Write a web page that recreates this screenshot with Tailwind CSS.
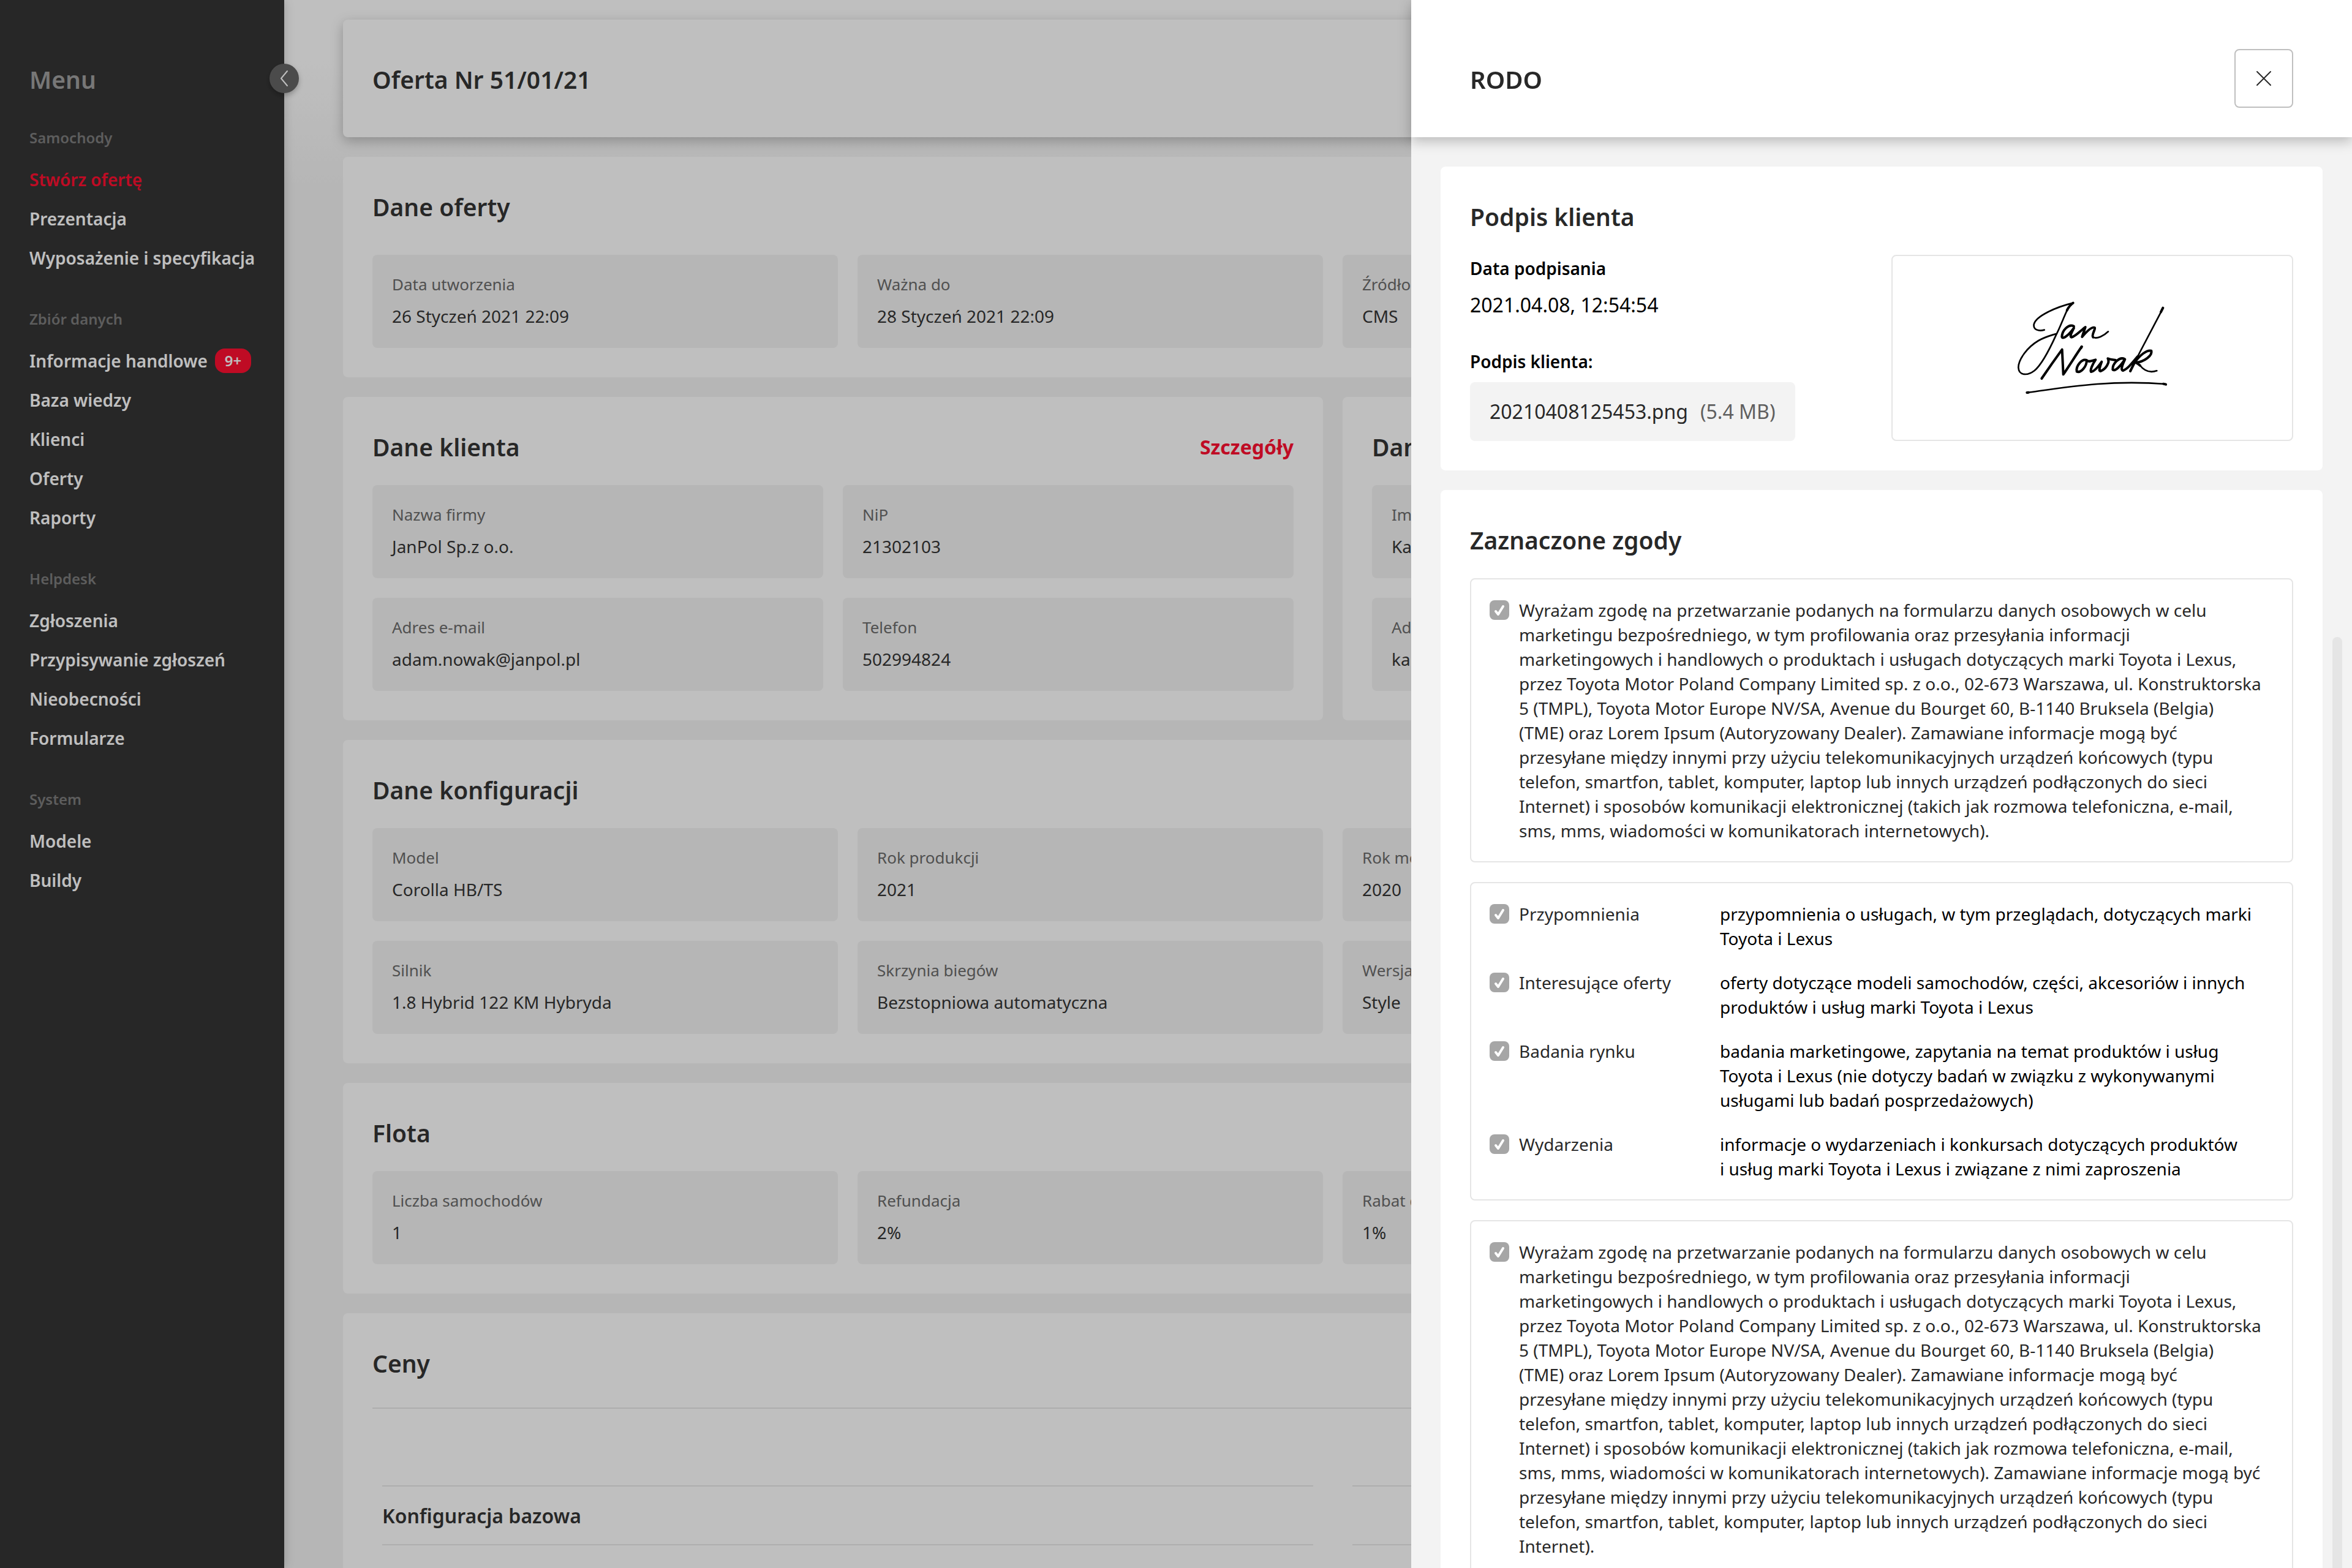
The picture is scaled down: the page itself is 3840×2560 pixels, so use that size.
<!DOCTYPE html>
<html lang="pl">
<head>
  <meta charset="UTF-8" />
  <title>Oferta Nr 51/01/21 - RODO</title>
  <meta name="viewport" content="width=device-width, initial-scale=1" />
  <script src="https://cdn.jsdelivr.net/npm/@tailwindcss/browser@4"></script>
</head>
<body class="h-screen overflow-hidden bg-[#f3f3f3] font-['Noto_Sans',sans-serif] text-[28px] leading-10 text-[#353535]">

  <div class="flex h-full">

    <!-- Sidebar -->
    <aside class="relative z-10 w-[464px] shrink-0 bg-[#353535] pt-24 pr-8 pl-12 whitespace-nowrap text-white shadow-[0_0_16px_rgba(0,0,0,0.2)]">
      <button type="button" aria-label="Zwiń menu" class="absolute top-[104px] -right-6 grid size-12 place-items-center rounded-full bg-[#656565] shadow-[0_4px_8px_rgba(0,0,0,0.25)]">
        <svg class="h-7 w-4" viewBox="0 0 16 28" fill="none" stroke="currentColor" stroke-width="2" stroke-linecap="round" stroke-linejoin="round"><path d="M13 2 3 14l10 12" /></svg>
      </button>

      <h2 class="text-[39px] leading-[68px] font-semibold text-[#9f9f9f]">Menu</h2>

      <nav class="mt-[45px] flex flex-col gap-[52px] font-semibold">
        <section>
          <h3 class="mb-5 text-2xl leading-8 text-[#7d7d7d]">Samochody</h3>
          <ul class="leading-[64px]">
            <li><a href="#" class="text-[#ff0f31]">Stwórz ofertę</a></li>
            <li><a href="#">Prezentacja</a></li>
            <li><a href="#">Wyposażenie i specyfikacja</a></li>
          </ul>
        </section>
        <section>
          <h3 class="mb-5 text-2xl leading-8 text-[#7d7d7d]">Zbiór danych</h3>
          <ul class="leading-[64px]">
            <li class="flex items-center gap-3"><a href="#">Informacje handlowe</a><span class="rounded-2xl bg-[#ff0f31] px-4 text-2xl leading-10">9+</span></li>
            <li><a href="#">Baza wiedzy</a></li>
            <li><a href="#">Klienci</a></li>
            <li><a href="#">Oferty</a></li>
            <li><a href="#">Raporty</a></li>
          </ul>
        </section>
        <section>
          <h3 class="mb-5 text-2xl leading-8 text-[#7d7d7d]">Helpdesk</h3>
          <ul class="leading-[64px]">
            <li><a href="#">Zgłoszenia</a></li>
            <li><a href="#">Przypisywanie zgłoszeń</a></li>
            <li><a href="#">Nieobecności</a></li>
            <li><a href="#">Formularze</a></li>
          </ul>
        </section>
        <section>
          <h3 class="mb-5 text-2xl leading-8 text-[#7d7d7d]">System</h3>
          <ul class="leading-[64px]">
            <li><a href="#">Modele</a></li>
            <li><a href="#">Buildy</a></li>
          </ul>
        </section>
      </nav>
    </aside>

    <!-- Offer -->
    <main class="flex min-w-0 flex-1 flex-col gap-8 overflow-hidden bg-[linear-gradient(#ffffff_100px,#f3f3f3_300px)] pt-8 pr-12 pl-24">
      <header class="flex h-48 shrink-0 items-center rounded-lg bg-white px-12 pt-1 shadow-[0_6px_20px_rgba(0,0,0,0.25)]">
        <h1 class="text-[39px] leading-[68px] font-semibold">Oferta Nr 51/01/21</h1>
      </header>

      <section class="shrink-0 rounded-lg bg-white p-12">
        <h2 class="text-[39px] leading-[68px] font-semibold">Dane oferty</h2>
        <dl class="mt-11 grid grid-cols-4 gap-8">
          <div class="rounded-lg bg-[#f3f3f3] p-8">
            <dt class="text-[26px] leading-8 text-[#6b6b6b]">Data utworzenia</dt>
            <dd class="mt-4">26 Styczeń 2021 22:09</dd>
          </div>
          <div class="rounded-lg bg-[#f3f3f3] p-8">
            <dt class="text-[26px] leading-8 text-[#6b6b6b]">Ważna do</dt>
            <dd class="mt-4">28 Styczeń 2021 22:09</dd>
          </div>
          <div class="rounded-lg bg-[#f3f3f3] p-8">
            <dt class="text-[26px] leading-8 text-[#6b6b6b]">Źródło</dt>
            <dd class="mt-4">CMS</dd>
          </div>
        </dl>
      </section>

      <div class="grid shrink-0 grid-cols-2 gap-8">
        <section class="rounded-lg bg-white p-12">
          <div class="flex items-center justify-between">
            <h2 class="text-[39px] leading-[68px] font-semibold">Dane klienta</h2>
            <a href="#" class="text-[32px] font-bold text-[#ff0f31]">Szczegóły</a>
          </div>
          <dl class="mt-7 grid grid-cols-2 gap-8">
            <div class="rounded-lg bg-[#f3f3f3] p-8">
              <dt class="text-[26px] leading-8 text-[#6b6b6b]">Nazwa firmy</dt>
              <dd class="mt-4">JanPol Sp.z o.o.</dd>
            </div>
            <div class="rounded-lg bg-[#f3f3f3] p-8">
              <dt class="text-[26px] leading-8 text-[#6b6b6b]">NiP</dt>
              <dd class="mt-4">21302103</dd>
            </div>
            <div class="rounded-lg bg-[#f3f3f3] p-8">
              <dt class="text-[26px] leading-8 text-[#6b6b6b]">Adres e-mail</dt>
              <dd class="mt-4">adam.nowak@janpol.pl</dd>
            </div>
            <div class="rounded-lg bg-[#f3f3f3] p-8">
              <dt class="text-[26px] leading-8 text-[#6b6b6b]">Telefon</dt>
              <dd class="mt-4">502994824</dd>
            </div>
          </dl>
        </section>

        <section class="rounded-lg bg-white p-12">
          <h2 class="text-[39px] leading-[68px] font-semibold">Dane</h2>
          <dl class="mt-7 grid grid-cols-2 gap-8">
            <div class="col-start-1 rounded-lg bg-[#f3f3f3] p-8">
              <dt class="text-[26px] leading-8 text-[#6b6b6b]">Imię</dt>
              <dd class="mt-4">Karol</dd>
            </div>
            <div class="col-start-1 rounded-lg bg-[#f3f3f3] p-8">
              <dt class="text-[26px] leading-8 text-[#6b6b6b]">Adres e-mail</dt>
              <dd class="mt-4">karol</dd>
            </div>
          </dl>
        </section>
      </div>

      <section class="shrink-0 rounded-lg bg-white p-12">
        <h2 class="text-[39px] leading-[68px] font-semibold">Dane konfiguracji</h2>
        <dl class="mt-7 grid grid-cols-4 gap-8">
          <div class="rounded-lg bg-[#f3f3f3] p-8">
            <dt class="text-[26px] leading-8 text-[#6b6b6b]">Model</dt>
            <dd class="mt-4">Corolla HB/TS</dd>
          </div>
          <div class="rounded-lg bg-[#f3f3f3] p-8">
            <dt class="text-[26px] leading-8 text-[#6b6b6b]">Rok produkcji</dt>
            <dd class="mt-4">2021</dd>
          </div>
          <div class="rounded-lg bg-[#f3f3f3] p-8">
            <dt class="text-[26px] leading-8 text-[#6b6b6b]">Rok modelowy</dt>
            <dd class="mt-4">2020</dd>
          </div>
          <div class="col-start-1 rounded-lg bg-[#f3f3f3] p-8">
            <dt class="text-[26px] leading-8 text-[#6b6b6b]">Silnik</dt>
            <dd class="mt-4">1.8 Hybrid 122 KM Hybryda</dd>
          </div>
          <div class="rounded-lg bg-[#f3f3f3] p-8">
            <dt class="text-[26px] leading-8 text-[#6b6b6b]">Skrzynia biegów</dt>
            <dd class="mt-4">Bezstopniowa automatyczna</dd>
          </div>
          <div class="rounded-lg bg-[#f3f3f3] p-8">
            <dt class="text-[26px] leading-8 text-[#6b6b6b]">Wersja</dt>
            <dd class="mt-4">Style</dd>
          </div>
        </dl>
      </section>

      <section class="shrink-0 rounded-lg bg-white p-12">
        <h2 class="text-[39px] leading-[68px] font-semibold">Flota</h2>
        <dl class="mt-7 grid grid-cols-4 gap-8">
          <div class="rounded-lg bg-[#f3f3f3] p-8">
            <dt class="text-[26px] leading-8 text-[#6b6b6b]">Liczba samochodów</dt>
            <dd class="mt-4">1</dd>
          </div>
          <div class="rounded-lg bg-[#f3f3f3] p-8">
            <dt class="text-[26px] leading-8 text-[#6b6b6b]">Refundacja</dt>
            <dd class="mt-4">2%</dd>
          </div>
          <div class="rounded-lg bg-[#f3f3f3] p-8">
            <dt class="text-[26px] leading-8 text-[#6b6b6b]">Rabat dealera</dt>
            <dd class="mt-4">1%</dd>
          </div>
        </dl>
      </section>

      <section class="shrink-0 rounded-lg bg-white p-12 pb-24">
        <h2 class="border-b-2 border-[#e8e8e8] pb-[38px] text-[39px] leading-[68px] font-semibold">Ceny</h2>
        <div class="mt-[125px] grid grid-cols-2 gap-16 px-4">
          <h3 class="border-y-2 border-[#e8e8e8] pt-7 pb-[26px] text-[32px] leading-10 font-semibold">Konfiguracja bazowa</h3>
          <div class="border-y-2 border-[#e8e8e8]"></div>
        </div>
      </section>
    </main>
  </div>

  <div class="fixed inset-0 z-20 bg-black/25"></div>

  <!-- RODO drawer -->
  <aside role="dialog" aria-labelledby="drawer-title" class="fixed inset-y-0 right-0 z-30 flex w-2/5 flex-col bg-[#f3f3f3] text-[#282828]">
    <header class="relative z-10 flex h-56 shrink-0 items-center justify-between bg-white px-24 pt-8 shadow-[0_6px_20px_rgba(0,0,0,0.25)]">
      <h2 id="drawer-title" class="pt-1 text-[40px] leading-[68px] font-semibold">RODO</h2>
      <button type="button" aria-label="Zamknij" class="grid size-24 place-items-center rounded-lg border-2 border-[#bfbfbf]">
        <svg class="size-7" viewBox="0 0 28 28" fill="none" stroke="currentColor" stroke-width="2" stroke-linecap="round"><path d="m3 3 22 22M25 3 3 25" /></svg>
      </button>
    </header>

    <div class="relative flex min-h-0 flex-1 flex-col gap-8 overflow-hidden px-12 pt-12">
      <section class="shrink-0 rounded-lg bg-white p-12">
        <h3 class="text-[39px] leading-[68px] font-semibold">Podpis klienta</h3>
        <div class="mt-7 flex items-stretch justify-between gap-12">
          <div class="text-black">
            <h4 class="leading-[44px] font-semibold">Data podpisania</h4>
            <p class="mt-4 text-[32px] leading-[44px]">2021.04.08, 12:54:54</p>
            <h4 class="mt-12 leading-[44px] font-semibold">Podpis klienta:</h4>
            <p class="mt-3 flex gap-5 rounded-lg bg-[#f3f3f3] px-8 py-6 text-[32px] leading-[48px]">
              <a href="#" class="text-[#282828]">20210408125453.png</a>
              <span class="text-[#5f5f5f]">(5.4 MB)</span>
            </p>
          </div>
          <div class="grid w-[656px] place-items-center rounded-lg border-2 border-[#e5e5e5]">
            <svg class="h-[156px] w-[252px]" viewBox="90 90 756 468" fill="none" stroke="#000" stroke-linecap="round" stroke-linejoin="round" role="img" aria-label="Podpis">
              <g stroke-width="8">
                <path d="M233 236C205 243 178 236 182 208C192 168 290 124 374 104" />
                <path d="M350 128C330 168 312 220 290 262C250 350 215 410 185 435C150 462 108 460 106 420C106 380 150 320 205 288C240 268 270 262 293 254" />
                <path d="M148 543C350 515 550 480 828 501" />
                <path d="M814 130 690 366" />
                <path d="M472 272C492 282 525 264 546 244" />
                <path d="M700 408C725 440 755 446 784 436" />
              </g>
              <g stroke-width="12">
                <path d="M374 104C362 112 354 120 344 140" />
                <path d="M378 218C352 204 320 238 319 270C324 284 352 262 378 226C366 250 356 268 366 272C385 268 412 238 434 222L418 270C440 244 466 218 480 225C484 234 462 262 472 272" />
                <path d="M220 474C250 430 288 376 320 332L326 454C355 412 390 355 416 318" />
                <path d="M440 384C418 376 386 412 392 440C412 448 442 414 440 384C450 396 466 386 484 382C470 402 455 436 462 441C480 440 500 412 514 392C504 420 498 438 508 438C532 430 556 396 544 376C560 382 572 382 582 384" />
                <path d="M626 378C600 366 566 402 568 430C580 444 610 406 628 380C614 410 606 432 618 435C640 428 660 402 690 366L654 438" />
                <path d="M672 400C700 360 735 332 757 338C764 360 724 392 680 396C690 400 695 404 702 410" />
                <path d="M814 128 804 148M816 500 828 503M416 318 413 324M148 543 156 542" />
              </g>
            </svg>
          </div>
        </div>
      </section>

      <section class="shrink-0 rounded-lg bg-white p-12">
        <h3 class="text-[39px] leading-[68px] font-semibold">Zaznaczone zgody</h3>

        <div class="mt-7 flex flex-col gap-8">
          <div class="flex gap-4 rounded-lg border-2 border-[#e5e5e5] p-[30px] pr-11">
            <div class="mt-1 grid size-8 shrink-0">
              <input id="zgoda-1" type="checkbox" checked disabled class="col-start-1 row-start-1 size-8 appearance-none rounded-lg bg-[#a6a6a6]" />
              <svg class="pointer-events-none col-start-1 row-start-1 size-8" viewBox="0 0 32 32" fill="none" stroke="#fff" stroke-width="4" stroke-linecap="round" stroke-linejoin="round"><path d="m10 18 4 5 8-13" /></svg>
            </div>
            <label for="zgoda-1">Wyrażam zgodę na przetwarzanie podanych na formularzu danych osobowych w celu marketingu bezpośredniego, w tym profilowania oraz przesyłania informacji marketingowych i handlowych o produktach i usługach dotyczących marki Toyota i Lexus, przez Toyota Motor Poland Company Limited sp. z o.o., 02-673 Warszawa, ul. Konstruktorska 5 (TMPL), Toyota Motor Europe NV/SA, Avenue du Bourget 60, B-1140 Bruksela (Belgia)<br />(TME) oraz Lorem Ipsum (Autoryzowany Dealer). Zamawiane informacje mogą być<br />przesyłane między innymi przy użyciu telekomunikacyjnych urządzeń końcowych (typu telefon, smartfon, tablet, komputer, laptop lub innych urządzeń podłączonych do sieci Internet) i sposobów komunikacji elektronicznej (takich jak rozmowa telefoniczna, e-mail,<br />sms, mms, wiadomości w komunikatorach internetowych).</label>
          </div>

          <div class="flex flex-col gap-8 rounded-lg border-2 border-[#e5e5e5] p-[30px]">
            <div class="flex gap-4">
              <div class="mt-1 grid size-8 shrink-0">
                <input id="zgoda-2" type="checkbox" checked disabled class="col-start-1 row-start-1 size-8 appearance-none rounded-lg bg-[#a6a6a6]" />
                <svg class="pointer-events-none col-start-1 row-start-1 size-8" viewBox="0 0 32 32" fill="none" stroke="#fff" stroke-width="4" stroke-linecap="round" stroke-linejoin="round"><path d="m10 18 4 5 8-13" /></svg>
              </div>
              <label for="zgoda-2" class="w-[312px] shrink-0">Przypomnienia</label>
              <p class="text-black">przypomnienia o usługach, w tym przeglądach, dotyczących marki Toyota i Lexus</p>
            </div>
            <div class="flex gap-4">
              <div class="mt-1 grid size-8 shrink-0">
                <input id="zgoda-3" type="checkbox" checked disabled class="col-start-1 row-start-1 size-8 appearance-none rounded-lg bg-[#a6a6a6]" />
                <svg class="pointer-events-none col-start-1 row-start-1 size-8" viewBox="0 0 32 32" fill="none" stroke="#fff" stroke-width="4" stroke-linecap="round" stroke-linejoin="round"><path d="m10 18 4 5 8-13" /></svg>
              </div>
              <label for="zgoda-3" class="w-[312px] shrink-0">Interesujące oferty</label>
              <p class="text-black">oferty dotyczące modeli samochodów, części, akcesoriów i innych produktów i usług marki Toyota i Lexus</p>
            </div>
            <div class="flex gap-4">
              <div class="mt-1 grid size-8 shrink-0">
                <input id="zgoda-4" type="checkbox" checked disabled class="col-start-1 row-start-1 size-8 appearance-none rounded-lg bg-[#a6a6a6]" />
                <svg class="pointer-events-none col-start-1 row-start-1 size-8" viewBox="0 0 32 32" fill="none" stroke="#fff" stroke-width="4" stroke-linecap="round" stroke-linejoin="round"><path d="m10 18 4 5 8-13" /></svg>
              </div>
              <label for="zgoda-4" class="w-[312px] shrink-0">Badania rynku</label>
              <p class="text-black">badania marketingowe, zapytania na temat produktów i usług Toyota i Lexus (nie dotyczy badań w związku z wykonywanymi usługami lub badań posprzedażowych)</p>
            </div>
            <div class="flex gap-4">
              <div class="mt-1 grid size-8 shrink-0">
                <input id="zgoda-5" type="checkbox" checked disabled class="col-start-1 row-start-1 size-8 appearance-none rounded-lg bg-[#a6a6a6]" />
                <svg class="pointer-events-none col-start-1 row-start-1 size-8" viewBox="0 0 32 32" fill="none" stroke="#fff" stroke-width="4" stroke-linecap="round" stroke-linejoin="round"><path d="m10 18 4 5 8-13" /></svg>
              </div>
              <label for="zgoda-5" class="w-[312px] shrink-0">Wydarzenia</label>
              <p class="text-black">informacje o wydarzeniach i konkursach dotyczących produktów i&nbsp;usług marki Toyota i Lexus i związane z nimi zaproszenia</p>
            </div>
          </div>

          <div class="flex gap-4 rounded-lg border-2 border-[#e5e5e5] p-[30px] pr-11">
            <div class="mt-1 grid size-8 shrink-0">
              <input id="zgoda-6" type="checkbox" checked disabled class="col-start-1 row-start-1 size-8 appearance-none rounded-lg bg-[#a6a6a6]" />
              <svg class="pointer-events-none col-start-1 row-start-1 size-8" viewBox="0 0 32 32" fill="none" stroke="#fff" stroke-width="4" stroke-linecap="round" stroke-linejoin="round"><path d="m10 18 4 5 8-13" /></svg>
            </div>
            <label for="zgoda-6">Wyrażam zgodę na przetwarzanie podanych na formularzu danych osobowych w celu marketingu bezpośredniego, w tym profilowania oraz przesyłania informacji marketingowych i handlowych o produktach i usługach dotyczących marki Toyota i Lexus, przez Toyota Motor Poland Company Limited sp. z o.o., 02-673 Warszawa, ul. Konstruktorska 5 (TMPL), Toyota Motor Europe NV/SA, Avenue du Bourget 60, B-1140 Bruksela (Belgia)<br />(TME) oraz Lorem Ipsum (Autoryzowany Dealer). Zamawiane informacje mogą być<br />przesyłane między innymi przy użyciu telekomunikacyjnych urządzeń końcowych (typu telefon, smartfon, tablet, komputer, laptop lub innych urządzeń podłączonych do sieci Internet) i sposobów komunikacji elektronicznej (takich jak rozmowa telefoniczna, e-mail,<br />sms, mms, wiadomości w komunikatorach internetowych). Zamawiane informacje mogą być przesyłane między innymi przy użyciu telekomunikacyjnych urządzeń końcowych (typu telefon, smartfon, tablet, komputer, laptop lub innych urządzeń podłączonych do sieci Internet).</label>
          </div>
        </div>
      </section>

      <!-- scrollbar thumb -->
      <div class="absolute top-[816px] right-4 -bottom-4 w-4 rounded-full bg-[#e5e5e5]"></div>
    </div>
  </aside>

</body>
</html>
